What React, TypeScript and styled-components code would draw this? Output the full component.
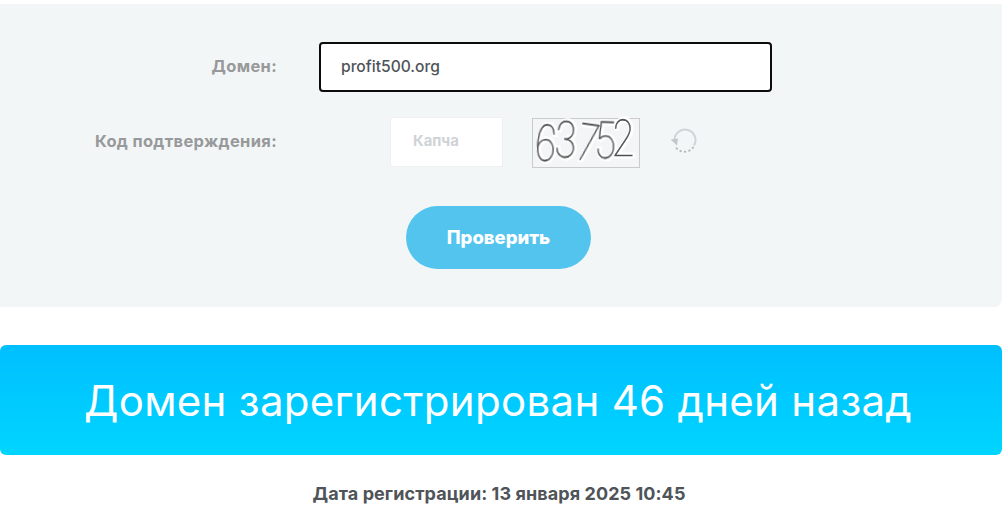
import { FC } from 'react';
import styled, { createGlobalStyle } from 'styled-components';

const GlobalStyle = createGlobalStyle`
  html, body {
    margin: 0;
    padding: 0;
    background: #ffffff;
    overflow: hidden;
    font-family: 'Inter', 'Liberation Sans', sans-serif;
  }
`;

const Page = styled.div`
  width: 1002px;
  padding-top: 4px;
`;

const CheckForm = styled.form`
  box-sizing: border-box;
  height: 303px;
  padding-top: 38px;
  background: #f3f6f7;
  border-radius: 0 0 8px 0;
  display: flex;
  flex-direction: column;
`;

const Row = styled.div<{ $top?: number }>`
  display: flex;
  align-items: center;
  height: 50px;
  margin-top: ${({ $top }) => $top ?? 0}px;
`;

const Label = styled.label`
  width: 277px;
  padding-bottom: 2px;
  text-align: right;
  font-size: 16.5px;
  font-weight: 700;
  letter-spacing: 0.33px;
  color: #97999a;
`;

const DomainInput = styled.input`
  box-sizing: border-box;
  width: 453px;
  height: 50px;
  margin-left: 42px;
  padding: 0 20px 2px;
  background: #ffffff;
  border: 2px solid #0c0c0c;
  border-radius: 4px;
  outline: none;
  font-family: inherit;
  font-size: 15.6px;
  font-weight: 500;
  color: #4f5459;
`;

const CaptchaInput = styled.input`
  box-sizing: border-box;
  width: 113px;
  height: 50px;
  margin-left: 113px;
  padding: 0 22px 2px;
  background: #ffffff;
  border: 1px solid #eef0f1;
  border-radius: 2px;
  outline: none;
  font-family: inherit;
  font-size: 14.8px;
  font-weight: 700;
  &::placeholder {
    color: #cfd2d5;
    opacity: 1;
  }
`;

const CaptchaImage = styled.div`
  box-sizing: border-box;
  flex-shrink: 0;
  width: 108px;
  height: 50px;
  margin: 2px 0 0 29px;
  background: #f3f5f6;
  border: 1px solid #c9cccd;
  display: flex;
`;

const CaptchaCanvas = styled.svg`
  overflow: visible;
`;

const CaptchaHalo = styled.text`
  font-family: 'Inter', sans-serif;
  font-size: 50px;
  font-weight: 100;
  fill: #ffffff;
  stroke: #ffffff;
  stroke-width: 5;
`;

const CaptchaDigit = styled.text`
  font-family: 'Inter', sans-serif;
  font-size: 50px;
  font-weight: 100;
  fill: #4e5153;
  stroke: #4e5153;
  stroke-width: 0.5;
  filter: blur(0.4px);
`;

const RefreshButton = styled.button`
  margin: 0 0 2px 29px;
  padding: 0;
  width: 30px;
  height: 30px;
  border: none;
  background: none;
  display: flex;
`;

const SubmitButton = styled.button`
  align-self: flex-start;
  width: 185px;
  height: 63px;
  margin: 39px 0 0 406px;
  padding: 0 0 2px;
  border: none;
  border-radius: 32px;
  background: #53c4ee;
  color: #ffffff;
  font-family: inherit;
  font-size: 18.5px;
  font-weight: 800;
`;

const AgeBanner = styled.div`
  height: 110px;
  margin-top: 38px;
  padding-right: 6px;
  border-radius: 6px;
  background: linear-gradient(180deg, #00bfff 0%, #00d5ff 100%);
  color: #ffffff;
  font-size: 42px;
  font-weight: 400;
  letter-spacing: 0.3px;
  display: flex;
  align-items: center;
  justify-content: center;
`;

const RegisteredAt = styled.div`
  margin-top: 27px;
  padding-right: 4px;
  text-align: center;
  font-size: 18px;
  line-height: 24px;
  font-weight: 700;
  letter-spacing: 0.08px;
  color: #4f5459;
`;

const digits: Array<[string, number, number, number]> = [
  ['6', 1, 41, 5],
  ['3', 21, 38, 3],
  ['7', 43, 40, 8],
  ['5', 62, 39, 2],
  ['2', 79, 37, 0],
];

const Captcha: FC = () => (
  <CaptchaImage>
    <CaptchaCanvas width="106" height="48" viewBox="0 0 106 48">
      {digits.map(([digit, x, y, angle]) => (
        <CaptchaHalo key={x} transform={`translate(${x} ${y}) rotate(${angle}) scale(0.8 1)`}>
          {digit}
        </CaptchaHalo>
      ))}
      {digits.map(([digit, x, y, angle]) => (
        <CaptchaDigit key={x} transform={`translate(${x - 1} ${y}) rotate(${angle}) scale(0.8 1)`}>
          {digit}
        </CaptchaDigit>
      ))}
    </CaptchaCanvas>
  </CaptchaImage>
);

const RefreshIcon: FC = () => (
  <svg width="30" height="30" viewBox="0 0 30 30" fill="none">
    <path d="M5.5 14 A 10.5 10.5 0 1 1 25 19.5" stroke="#d0d4d6" strokeWidth="2" />
    <path
      d="M24 21.5 A 10.5 10.5 0 0 1 7 21.5"
      stroke="#b4b8bb"
      strokeWidth="2"
      strokeLinecap="round"
      strokeDasharray="0.5 4"
    />
    <path d="M1.5 13.5 L9 12.5 L8 19.5 Z" fill="#c3c7ca" />
  </svg>
);

const App: FC = () => (
  <Page>
    <GlobalStyle />
    <CheckForm>
      <Row>
        <Label>Домен:</Label>
        <DomainInput defaultValue="profit500.org" />
      </Row>
      <Row $top={25}>
        <Label>Код подтверждения:</Label>
        <CaptchaInput placeholder="Капча" />
        <Captcha />
        <RefreshButton type="button">
          <RefreshIcon />
        </RefreshButton>
      </Row>
      <SubmitButton type="button">Проверить</SubmitButton>
    </CheckForm>
    <AgeBanner>Домен зарегистрирован 46 дней назад</AgeBanner>
    <RegisteredAt>Дата регистрации: 13 января 2025 10:45</RegisteredAt>
  </Page>
);

export default App;
